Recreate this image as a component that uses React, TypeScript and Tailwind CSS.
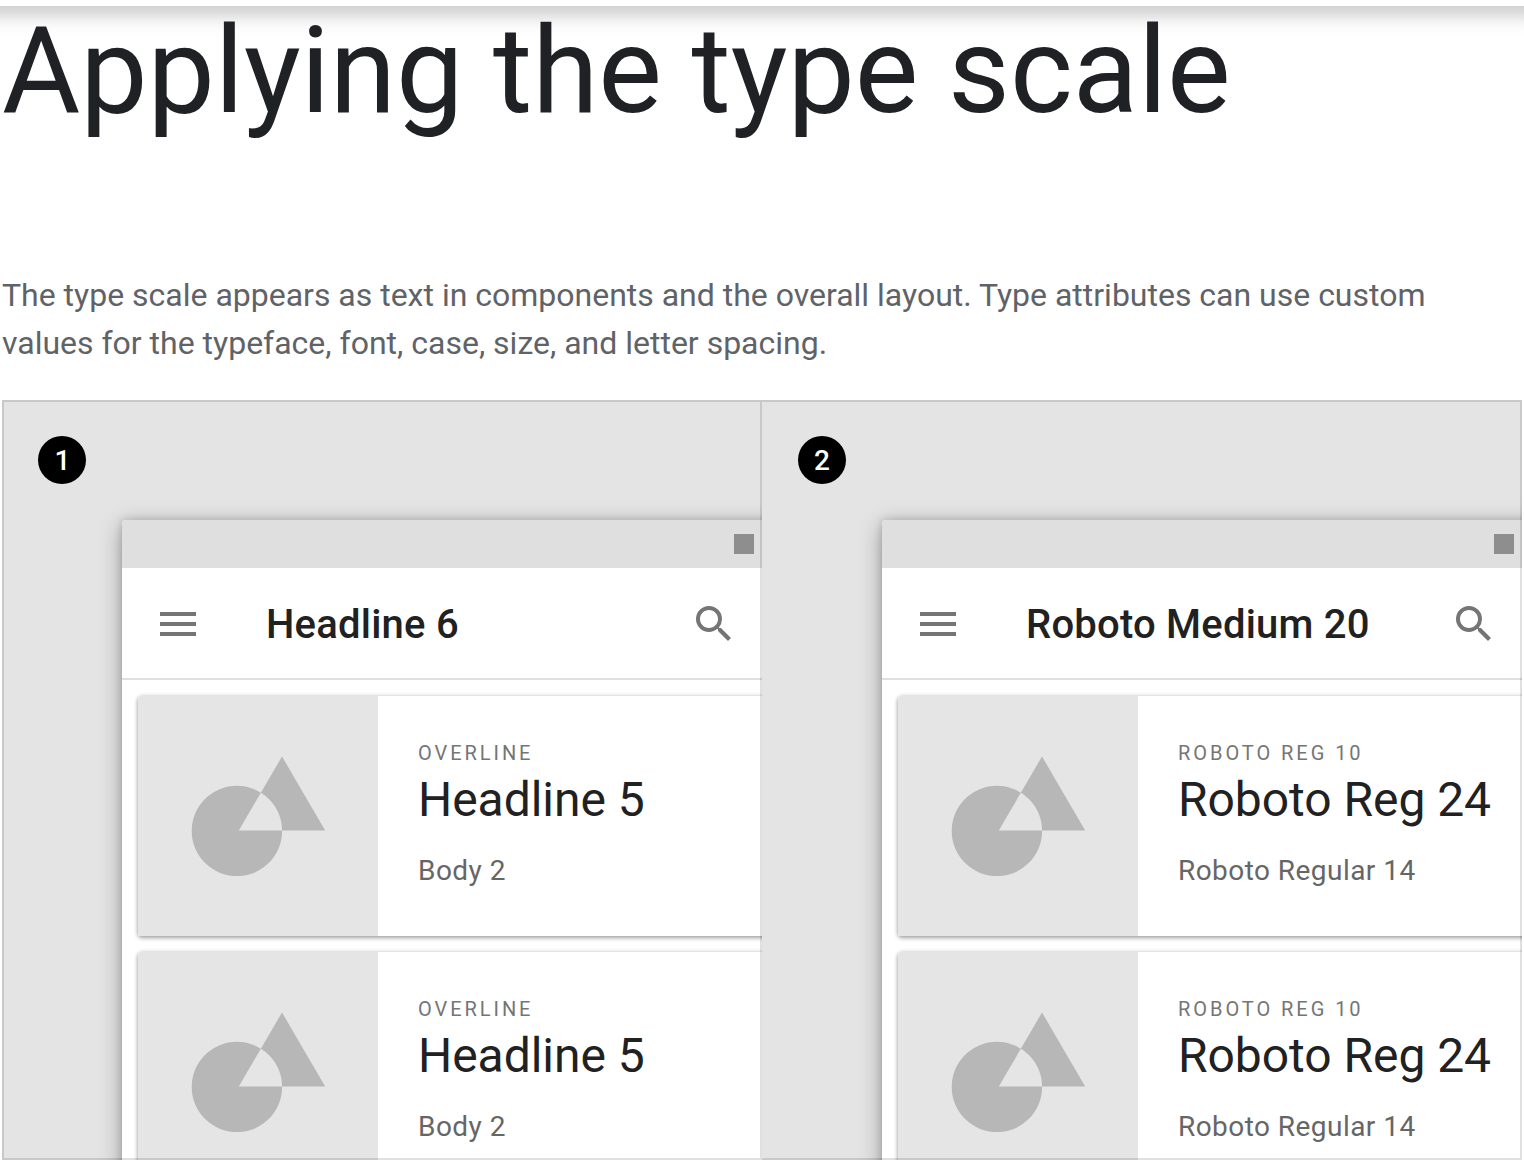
type Example = {
  badge: string;
  title: string;
  overline: string;
  headline: string;
  body: string;
};

const examples: Example[] = [
  { badge: '1', title: 'Headline 6', overline: 'OVERLINE', headline: 'Headline 5', body: 'Body 2' },
  {
    badge: '2',
    title: 'Roboto Medium 20',
    overline: 'ROBOTO REG 10',
    headline: 'Roboto Reg 24',
    body: 'Roboto Regular 14',
  },
];

function MenuIcon() {
  return (
    <svg className="size-12 shrink-0 fill-[#757575]" viewBox="0 0 24 24">
      <path d="M3 18h18v-2H3v2zm0-5h18v-2H3v2zm0-7v2h18V6H3z" />
    </svg>
  );
}

function SearchIcon() {
  return (
    <svg className="size-12 shrink-0 fill-[#757575]" viewBox="0 0 24 24">
      <path d="M15.5 14h-.79l-.28-.27A6.471 6.471 0 0 0 16 9.5 6.5 6.5 0 1 0 9.5 16c1.61 0 3.09-.59 4.23-1.57l.27.28v.79l5 4.99L20.49 19l-4.99-5zm-6 0C7.01 14 5 11.99 5 9.5S7.01 5 9.5 5 14 7.01 14 9.5 11.99 14 9.5 14z" />
    </svg>
  );
}

function Artwork() {
  return (
    <svg className="size-60 shrink-0 rounded-tl-sm bg-[#e5e5e5] fill-[#b7b7b7]" viewBox="0 0 240 240">
      <path
        fillRule="evenodd"
        d="M53.7 134.9a45.2 45.2 0 1 0 90.4 0a45.2 45.2 0 1 0 -90.4 0zM144 60.5L187.2 134.6H100.8z"
      />
    </svg>
  );
}

function Card({ item }: { item: Example }) {
  return (
    <div className="flex h-60 w-[688px] shrink-0 rounded-sm bg-white shadow-[0_2px_4px_rgba(0,0,0,0.32),0_0_4px_rgba(0,0,0,0.16)]">
      <Artwork />
      <div className="flex flex-col pt-[45px] pl-10 whitespace-nowrap">
        <div className="h-6 text-[20px] leading-6 tracking-[2.95px] text-[#757575]">{item.overline}</div>
        <div className="mt-[7px] h-14 text-[48px] leading-14 tracking-[-0.05px] text-[#212121]">{item.headline}</div>
        <div className="mt-[23px] h-10 text-[28px] leading-10 tracking-[0.45px] text-[#666666]">{item.body}</div>
      </div>
    </div>
  );
}

function Panel({ item, first }: { item: Example; first: boolean }) {
  return (
    <div className="relative h-[760px] w-[760px] overflow-hidden bg-[#e4e4e4] pt-9">
      <div
        className={`ml-9 flex size-12 items-center justify-center rounded-full bg-black pt-0.5 text-[28px] leading-8 font-medium text-white ${first ? 'pl-px' : ''}`}
      >
        {item.badge}
      </div>
      <div className="mt-9 ml-[120px] h-[1280px] w-[720px] rounded bg-white shadow-[0_6px_24px_rgba(0,0,0,0.3),0_0_8px_rgba(0,0,0,0.18)]">
        <div className="flex h-12 items-center rounded-t bg-[#dfdfdf] pl-[612px]">
          <div className="size-5 bg-[#8e8e8e]" />
        </div>
        <div className="flex h-28 items-center border-b-2 border-[#e0e0e0] pt-0.5 pl-8">
          <MenuIcon />
          <div className="ml-16 w-[424px] pt-0.5 text-[40px] leading-[60px] font-medium tracking-[0.22px] whitespace-nowrap text-[#212121]">
            {item.title}
          </div>
          <SearchIcon />
        </div>
        <div className="flex flex-col gap-4 pt-4 pl-4">
          <Card item={item} />
          <Card item={item} />
        </div>
      </div>
      <div className={`absolute inset-0 border-y-2 border-r-2 border-black/12 ${first ? 'border-l-2' : ''}`} />
    </div>
  );
}

export default function App() {
  return (
    <div className="h-[1160px] w-[1524px] overflow-hidden bg-white font-[Roboto,sans-serif]">
      <header className="h-1.5 bg-white" />
      <div className="h-[135px] bg-[linear-gradient(to_bottom,#d3d3d3_0px,#dadada_5px,#e5e5e5_10px,#f1f1f1_15px,#f9f9f9_20px,#fdfdfd_25px,#ffffff_32px)]">
        <h1 className="-translate-y-[5px] pl-0.5 text-[120px] leading-[140px] tracking-[-0.06px] whitespace-nowrap text-[#202124]">
          Applying the type scale
        </h1>
      </div>
      <p className="mt-[130px] ml-0.5 h-24 w-[1500px] text-[32px] leading-[48px] tracking-[-0.006px] text-[#5f6368]">
        The type scale appears as text in components and the overall layout. Type attributes can use custom
        <br />
        values for the typeface, font, case, size, and letter spacing.
      </p>
      <div className="mt-[33px] ml-0.5 flex">
        {examples.map((item, i) => (
          <Panel key={item.badge} item={item} first={i === 0} />
        ))}
      </div>
    </div>
  );
}
